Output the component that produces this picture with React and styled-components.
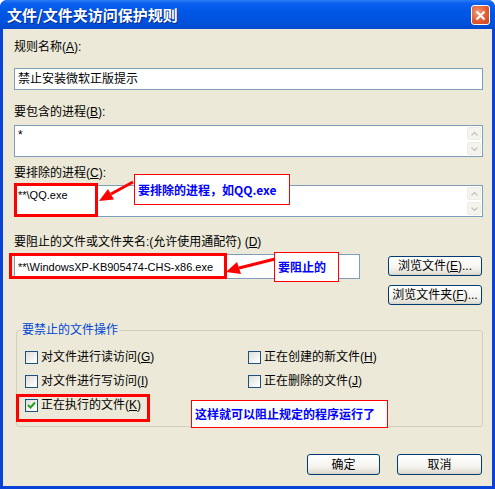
import React from "react";
import styled, { createGlobalStyle } from "styled-components";

const Global = createGlobalStyle`
  html, body { margin: 0; padding: 0; background: #fff; }
  body { font-family: "Liberation Sans", "Noto Sans CJK SC", sans-serif; font-size: 12px; color: #000; }
`;

const Frame = styled.div`
  position: relative;
  width: 495px;
  height: 489px;
  display: flex;
  flex-direction: column;
  background: #0842d6;
  border-radius: 7px 7px 0 0;
  overflow: hidden;
`;

const TitleBar = styled.div`
  height: 29px;
  flex: none;
  display: flex;
  align-items: center;
  justify-content: space-between;
  padding: 0 5px 0 7px;
  background: linear-gradient(to bottom, #2a7bf5 0%, #0a5fee 12%, #0057e6 40%, #0052de 75%, #0049cc 100%);
`;

const Title = styled.span`
  color: #fff;
  font-family: "Noto Sans CJK SC", sans-serif;
  font-weight: bold;
  font-size: 15px;
  line-height: 18px;
  text-shadow: 1px 1px 0 #0a2a8a;
`;

const CloseBtn = styled.div`
  width: 17px;
  height: 18px;
  margin-top: 1px;
  border: 1px solid #fff;
  border-radius: 3px;
  background: radial-gradient(circle at 35% 35%, #f29a7a 0%, #e25a32 55%, #c9441f 100%);
  display: flex;
  align-items: center;
  justify-content: center;
`;

const Body = styled.div`
  flex: 1;
  margin: 0 3px 3px 3px;
  background: #ece9d8;
  padding: 11px 9px 0 11px;
  display: flex;
  flex-direction: column;
`;

const Label = styled.div`
  line-height: 14px;
  height: 14px;
  margin-top: ${(p) => p.$mt || 0}px;
  white-space: nowrap;
`;

const Field = styled.div`
  box-sizing: border-box;
  margin-top: ${(p) => p.$mt || 0}px;
  width: ${(p) => (p.$w ? `${p.$w}px` : "100%")};
  height: ${(p) => p.$h}px;
  border: 1px solid #7f9db9;
  background: #fff;
  display: flex;
  align-items: ${(p) => (p.$multi ? "flex-start" : "center")};
  padding-left: 3px;
  white-space: nowrap;
`;

const FieldText = styled.div`
  flex: 1;
  line-height: 14px;
  padding-top: ${(p) => (p.$multi ? 2 : 0)}px;
`;

const Latin = styled.span`
  font-size: 11px;
`;

const Scroll = styled.div`
  display: flex;
  flex-direction: column;
  gap: 2px;
  padding: 1px 1px 0 0;
`;

const ScrollBtn = styled.div`
  width: 14px;
  height: 13px;
  box-sizing: border-box;
  border: 1px solid #eeede5;
  border-radius: 2px;
  background: #f4f3ee;
  display: flex;
  align-items: center;
  justify-content: center;
`;

const PathRow = styled.div`
  display: flex;
  align-items: flex-start;
  margin-top: 5px;
`;

const BrowseCol = styled.div`
  margin: 2px 1px 0 auto;
  display: flex;
  flex-direction: column;
  gap: 9px;
`;

const Button = styled.div`
  box-sizing: border-box;
  width: ${(p) => p.$w}px;
  height: ${(p) => p.$h || 20}px;
  border: 1px solid #003c74;
  border-radius: 3px;
  background: linear-gradient(to bottom, #ffffff 0%, #f5f4ef 60%, #e3e0d6 90%, #d6d0c5 100%);
  display: flex;
  align-items: center;
  justify-content: center;
  line-height: 14px;
  white-space: nowrap;
`;

const Group = styled.fieldset`
  margin: 18px 0 0 2px;
  padding: 8px 4px 9px 4px;
  border: 1px solid #d0d0bf;
  border-radius: 3px;
`;

const Legend = styled.legend`
  padding: 0 1px;
  color: #0046d5;
  line-height: 14px;
`;

const CheckGrid = styled.div`
  display: grid;
  grid-template-columns: 223px 1fr;
  grid-auto-rows: 24px;
  margin-left: 4px;
`;

const CheckItem = styled.div`
  display: flex;
  align-items: center;
  gap: 3px;
  line-height: 14px;
  white-space: nowrap;
`;

const Box = styled.div`
  width: 13px;
  height: 13px;
  box-sizing: border-box;
  border: 1px solid #1c5180;
  background: linear-gradient(135deg, #dcdcd7 0%, #ffffff 90%);
  display: flex;
  align-items: center;
  justify-content: center;
`;

const Footer = styled.div`
  display: flex;
  justify-content: flex-end;
  gap: 17px;
  margin: 27px 1px 0 0;
`;

const RedBox = styled.div`
  position: absolute;
  box-sizing: border-box;
  left: ${(p) => p.$x}px;
  top: ${(p) => p.$y}px;
  width: ${(p) => p.$w}px;
  height: ${(p) => p.$h}px;
  border: 3px solid #ff0000;
`;

const Note = styled.div`
  position: absolute;
  box-sizing: border-box;
  left: ${(p) => p.$x}px;
  top: ${(p) => p.$y}px;
  width: ${(p) => p.$w}px;
  height: ${(p) => p.$h}px;
  border: 1px solid #ff0000;
  background: #fff;
  color: #0000ff;
  font-weight: bold;
  font-family: "Noto Sans CJK SC", sans-serif;
  font-size: 12px;
  line-height: 14px;
  display: flex;
  align-items: center;
  padding-left: 3px;
  white-space: nowrap;
`;

const Arrows = styled.svg`
  position: absolute;
  left: 0;
  top: 0;
  pointer-events: none;
`;

const Acc = ({ k }) => (
  <>
    (<u>{k}</u>)
  </>
);

const Arrow = ({ up }) => (
  <svg width="7" height="4" viewBox="0 0 7 4">
    <path d={up ? "M0.5 3.5 L3.5 0.5 L6.5 3.5" : "M0.5 0.5 L3.5 3.5 L6.5 0.5"} fill="none" stroke="#c6c5bc" strokeWidth="1.3" />
  </svg>
);

const Spin = () => (
  <Scroll>
    <ScrollBtn><Arrow up /></ScrollBtn>
    <ScrollBtn><Arrow /></ScrollBtn>
  </Scroll>
);

const Check = ({ on, children }) => (
  <CheckItem>
    <Box>
      {on && (
        <svg width="9" height="9" viewBox="0 0 9 9">
          <path d="M1 4 L3.5 6.5 L8 1.5" fill="none" stroke="#21a121" strokeWidth="2" />
        </svg>
      )}
    </Box>
    <span>{children}</span>
  </CheckItem>
);

export default function App() {
  return (
    <>
      <Global />
      <Frame>
        <TitleBar>
          <Title>文件/文件夹访问保护规则</Title>
          <CloseBtn>
            <svg width="11" height="11" viewBox="0 0 11 11">
              <path d="M1.5 1.5 L9.5 9.5 M9.5 1.5 L1.5 9.5" stroke="#fff" strokeWidth="2.2" />
            </svg>
          </CloseBtn>
        </TitleBar>
        <Body>
          <Label>规则名称<Acc k="A" />:</Label>
          <Field $mt={14} $h={22}>
            <FieldText>禁止安装微软正版提示</FieldText>
          </Field>
          <Label $mt={15}>要包含的进程<Acc k="B" />:</Label>
          <Field $mt={6} $h={32} $multi>
            <FieldText $multi>*</FieldText>
            <Spin />
          </Field>
          <Label $mt={9}>要排除的进程<Acc k="C" />:</Label>
          <Field $mt={5} $h={32} $multi>
            <FieldText $multi><Latin>**\QQ.exe</Latin></FieldText>
            <Spin />
          </Field>
          <Label $mt={18}>要阻止的文件或文件夹名:(允许使用通配符) <Acc k="D" /></Label>
          <PathRow>
            <Field $w={346} $h={25}>
              <FieldText><Latin>**\WindowsXP-KB905474-CHS-x86.exe</Latin></FieldText>
            </Field>
            <BrowseCol>
              <Button $w={94}>浏览文件<Acc k="E" />...</Button>
              <Button $w={94}>浏览文件夹<Acc k="F" />...</Button>
            </BrowseCol>
          </PathRow>
          <Group>
            <Legend>要禁止的文件操作</Legend>
            <CheckGrid>
              <Check>对文件进行读访问<Acc k="G" /></Check>
              <Check>正在创建的新文件<Acc k="H" /></Check>
              <Check>对文件进行写访问<Acc k="I" /></Check>
              <Check>正在删除的文件<Acc k="J" /></Check>
              <Check on>正在执行的文件<Acc k="K" /></Check>
            </CheckGrid>
          </Group>
          <Footer>
            <Button $w={73} $h={21}>确定</Button>
            <Button $w={85} $h={21}>取消</Button>
          </Footer>
        </Body>

        <RedBox $x={14} $y={183} $w={84} $h={34} />
        <RedBox $x={9} $y={253} $w={218} $h={26} />
        <RedBox $x={16} $y={394} $w={134} $h={28} />
        <Note $x={134} $y={174} $w={156} $h={31}>要排除的进程，如QQ.exe</Note>
        <Note $x={274} $y={252} $w={65} $h={30}>要阻止的</Note>
        <Note $x={191} $y={400} $w={197} $h={28}>这样就可以阻止规定的程序运行了</Note>
        <Arrows width="495" height="489" viewBox="0 0 495 489">
          <line x1="133" y1="182" x2="111" y2="194" stroke="#ff0000" strokeWidth="3" />
          <polygon points="99,201 114,199.5 108,189" fill="#ff0000" />
          <line x1="275" y1="259" x2="239" y2="268" stroke="#ff0000" strokeWidth="3" />
          <polygon points="226,272 241,274 237,262" fill="#ff0000" />
        </Arrows>
      </Frame>
    </>
  );
}
